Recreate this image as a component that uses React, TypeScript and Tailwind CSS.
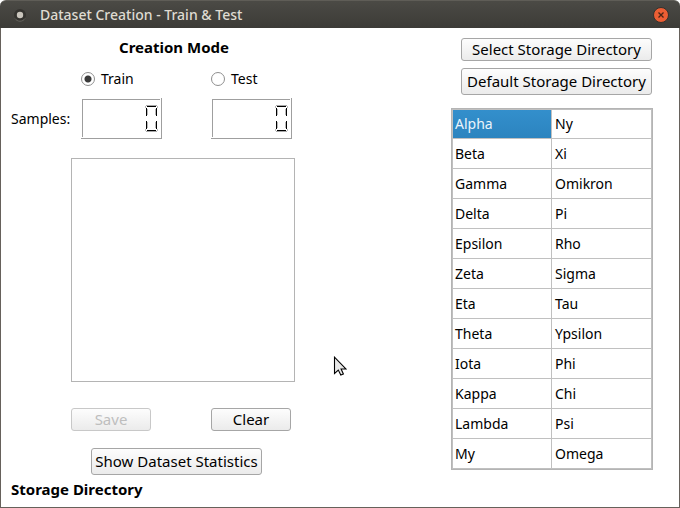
const rows: [string, string][] = [
  ['Alpha', 'Ny'],
  ['Beta', 'Xi'],
  ['Gamma', 'Omikron'],
  ['Delta', 'Pi'],
  ['Epsilon', 'Rho'],
  ['Zeta', 'Sigma'],
  ['Eta', 'Tau'],
  ['Theta', 'Ypsilon'],
  ['Iota', 'Phi'],
  ['Kappa', 'Chi'],
  ['Lambda', 'Psi'],
  ['My', 'Omega'],
];

const button =
  'rounded-[3px] border border-[#a6a6a6] bg-linear-to-b from-[#fdfdfd] to-[#ebebeb] text-center text-[15px] leading-[21px] whitespace-nowrap text-black disabled:border-[#c8c8c8] disabled:text-[#bebebe]';

function LcdZero({ label }: { label: string }) {
  return (
    <div className="h-[41px] w-[81px] border-b border-r border-[#9f9f9f] p-px">
      <div role="img" aria-label={label} className="flex h-full justify-end border-l border-t border-[#9f9f9f] pr-[2px] pt-[5px]">
        <svg width="13" height="28" viewBox="0 0 13 28" fill="none" shapeRendering="crispEdges">
          <path d="M1 .5h11M1 26.5h11" stroke="#a8a8a8" />
          <path d="M2 1.5h9M2 25.5h9" stroke="#000" />
          <path d="M1.5 3v8M11.5 3v8M1.5 16v8M11.5 16v8" stroke="#000" />
          <path d="M.5 1v2M12.5 1v2M.5 24v2M12.5 24v2M2.5 4v6M10.5 4v6M2.5 17v6M10.5 17v6" stroke="#b8b8b8" />
        </svg>
      </div>
    </div>
  );
}

function Mode({ id, label, checked }: { id: string; label: string; checked?: boolean }) {
  return (
    <div className="flex items-center gap-[6px]">
      <input
        type="radio"
        id={id}
        name="mode"
        defaultChecked={checked}
        className="size-[14px] appearance-none rounded-full border border-[#8f8f8f] bg-white checked:bg-[radial-gradient(circle,#3a3a3a_3px,#ffffff_4px)]"
      />
      <label htmlFor={id}>{label}</label>
    </div>
  );
}

export default function App() {
  return (
    <div className="flex min-h-screen flex-col bg-white font-['Noto_Sans',sans-serif] text-[14px] leading-5 text-black">
      <header className="flex h-7 items-center justify-between rounded-t-md border-t border-[#5f5d57] bg-linear-to-b from-[#4b4a45] to-[#3c3b37] pl-[13px] pr-[11px]">
        <div className="flex items-center gap-[13px]">
          <svg width="14" height="14" viewBox="0 0 14 14">
            <circle cx="7" cy="7" r="6" fill="#34332f" />
            <path d="M2 10.5a6 6 0 0 0 10 0" fill="none" stroke="#66645e" />
            <circle cx="7" cy="7" r="3.2" fill="#c9c5bc" />
          </svg>
          <h1 className="font-medium text-[#dfdbd2]">Dataset Creation - Train &amp; Test</h1>
        </div>
        <button type="button" aria-label="Close" className="size-4">
          <svg width="16" height="16" viewBox="0 0 16 16">
            <circle cx="8" cy="8" r="7.5" fill="#ec5e34" stroke="#33322e" />
            <path d="M5.5 5.5l5 5m0-5l-5 5" stroke="#4a2415" strokeWidth="1.3" />
          </svg>
        </button>
      </header>
      <main className="flex grow justify-between border-x border-b border-[#66615b] pl-[10px] pr-[26px]">
        <div className="flex w-[284px] flex-col pt-[9px]">
          <h2 className="pl-[42px] text-center text-[15px] font-bold leading-5">Creation Mode</h2>
          <div className="mt-3 grid grid-cols-[130px_auto] pl-[70px]">
            <Mode id="train" label="Train" checked />
            <Mode id="test" label="Test" />
          </div>
          <div className="mt-[9px] grid grid-cols-[70px_130px_auto] items-center">
            <span>Samples:</span>
            <LcdZero label="Train samples: 0" />
            <LcdZero label="Test samples: 0" />
          </div>
          <div className="ml-[60px] mt-[19px] h-[224px] border border-[#b4b4b4]" />
          <div className="mt-[26px] flex gap-[60px] pl-[60px]">
            <button type="button" disabled className={`${button} w-20`}>Save</button>
            <button type="button" className={`${button} w-20`}>Clear</button>
          </div>
          <button type="button" className={`${button} ml-20 mt-[17px] h-[27px] w-[171px]`}>Show Dataset Statistics</button>
          <h2 className="mt-1 text-[15px] font-bold leading-5">Storage Directory</h2>
        </div>
        <div className="flex w-[202px] flex-col pt-[10px]">
          <div className="flex flex-col gap-[7px] pl-[10px] pr-px">
            <button type="button" className={button}>Select Storage Directory</button>
            <button type="button" className={`${button} h-[27px]`}>Default Storage Directory</button>
          </div>
          <div className="mt-[13px] border border-[#b4b4b4]">
            <table className="w-full table-fixed border-separate border-spacing-0">
              <tbody>
                {rows.map(([a, b], i) => (
                  <tr key={a} className="h-[30px]">
                    <td className={`border-b border-l border-r border-[#c0c0c0] p-0 pl-[2px] ${i === 0 ? 'border-t bg-linear-to-b from-[#338fcc] to-[#2c84bf] text-[#eaf4fb]' : ''}`}>{a}</td>
                    <td className={`border-b border-r border-[#c0c0c0] p-0 pl-[3px] ${i === 0 ? 'border-t' : ''}`}>{b}</td>
                  </tr>
                ))}
              </tbody>
            </table>
          </div>
        </div>
      </main>
      <svg className="pointer-events-none absolute left-[333px] top-[356px]" width="14" height="21" viewBox="0 0 14 21" aria-hidden="true">
        <path d="M1.5 1.2v16.3l3.8-3.4 2.5 5 2.6-1.2-2.3-4.9h5z" fill="#e8e8e8" stroke="#000" strokeWidth="1.1" />
      </svg>
    </div>
  );
}
